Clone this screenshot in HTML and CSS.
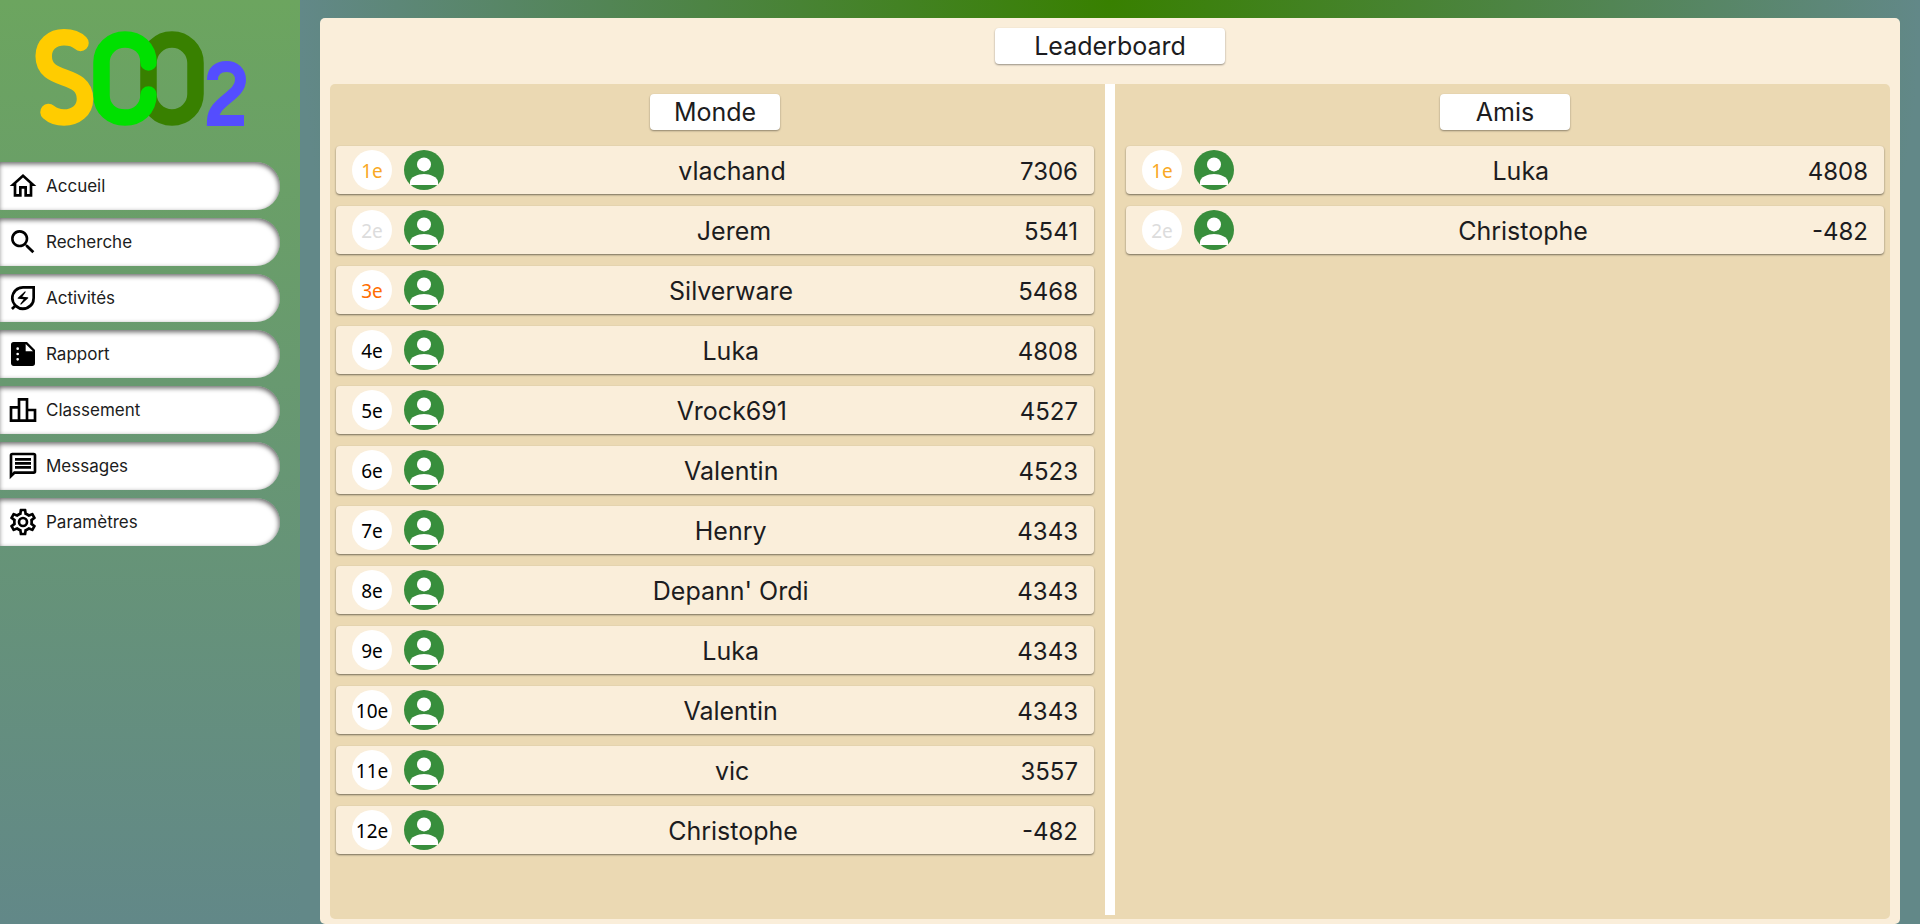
FILE: index.html
```html
<!DOCTYPE html>
<html lang="fr">
<head>
<meta charset="utf-8">
<title>SCO2 - Classement</title>
<link rel="stylesheet" href="styles.css">
</head>
<body>
<svg class="defs" aria-hidden="true">
  <symbol id="avatar" viewBox="0 0 40 40">
    <circle cx="20" cy="20" r="20" fill="#388e3c"/>
    <circle cx="20" cy="14.400" r="7" fill="#fff"/>
    <path d="M6 35v-3c0-5 8-8 14-8s14 3 14 8v3z" fill="#fff"/>
  </symbol>
</svg>
<aside class="sidebar">
  <svg class="logo" viewBox="0 0 300 162" role="img" aria-label="SCO2">
    <g fill="none" stroke-width="16.500" stroke-linecap="round">
      <rect x="148.500" y="39.500" width="47" height="78" rx="23.500" stroke="#388000"/>
      <path d="M148.500 62.500C148.500 48 138 39.500 125 39.500S101.500 49 101.500 62.500V95C101.500 109 112 117.500 125 117.500S148.500 109 148.500 94.500" stroke="#00e000"/>
      <path d="M80.500 43C76 38.500 70 37.200 64 37.200C52 37.200 43.700 45 43.700 56C43.700 84 85 71 85 99C85 110 76 117.500 64 117.500C58 117.500 53 116 48.500 112" stroke="#fc0"/>
      <path d="M212.500 80C212.500 71 218 66.500 226.500 66.500C235 66.500 240.500 72 240.500 80C240.500 96 213 101 212.500 120.500H244" stroke="#544dff" stroke-width="11" stroke-linecap="butt"/>
    </g>
  </svg>
  <nav class="menu">
    <a class="menu-item" href="#"><svg viewBox="0 0 24 24"><path d="m12 5.690 5 4.500V18h-2v-6H9v6H7v-7.810zM12 3 2 12h3v8h6v-6h2v6h6v-8h3z"/></svg>Accueil</a>
    <a class="menu-item" href="#"><svg viewBox="0 0 24 24"><path d="M15.500 14h-.79l-.28-.27A6.500 6.500 0 1 0 13.730 14.430l.27.28v.79l5 5L20.500 19zm-6 0a4.500 4.500 0 1 1 0-9 4.500 4.500 0 0 1 0 9z"/></svg>Recherche</a>
    <a class="menu-item" href="#"><svg viewBox="0 0 24 24"><path d="M12 3a9 9 0 0 0-7 14.660L3 19.590 4.410 21l1.930-1.930A9 9 0 0 0 21 12V3zm7 9a7 7 0 1 1-7-7h7zM8.460 12.630l4.050.4-2.440 3.330c-.11.160-.1.380.04.520.15.150.4.160.56.010l5.160-4.630c.33-.3.150-.85-.3-.89l-4.050-.4 2.440-3.330c.11-.16.100-.38-.04-.52a.405.405 0 0 0-.56-.01l-5.160 4.630c-.32.300-.14.850.3.890z"/></svg>Activités</a>
    <a class="menu-item" href="#"><svg viewBox="0 0 24 24"><path d="M15 3H5a2 2 0 0 0-2 2v14c0 1.100.9 2 2 2h14a2 2 0 0 0 2-2V9zM8 17a1 1 0 1 1 0-2 1 1 0 0 1 0 2zm0-4a1 1 0 1 1 0-2 1 1 0 0 1 0 2zm0-4a1 1 0 1 1 0-2 1 1 0 0 1 0 2zm6 1V4.500l5.500 5.500z"/></svg>Rapport</a>
    <a class="menu-item" href="#"><svg viewBox="0 0 24 24"><path d="M16 11V3H8v6H2v12h20V11zm-6-6h4v14h-4zm-6 6h4v8H4zm16 8h-4v-6h4z"/></svg>Classement</a>
    <a class="menu-item" href="#"><svg viewBox="0 0 24 24"><path d="M4 4h16v12H5.170L4 17.170zm0-2a2 2 0 0 0-2 2v18l4-4h14a2 2 0 0 0 2-2V4a2 2 0 0 0-2-2zm2 10h12v2H6zm0-3h12v2H6zm0-3h12v2H6z"/></svg>Messages</a>
    <a class="menu-item" href="#"><svg viewBox="0 0 24 24"><path d="M19.430 12.980c.04-.32.070-.64.070-.98s-.03-.66-.07-.98l2.110-1.650c.19-.15.240-.42.120-.64l-2-3.460a.5.500 0 0 0-.61-.22l-2.490 1a7.300 7.300 0 0 0-1.690-.98l-.38-2.650A.49.490 0 0 0 14 2h-4a.49.490 0 0 0-.49.420l-.38 2.650c-.61.250-1.170.590-1.690.980l-2.490-1a.5.500 0 0 0-.61.220l-2 3.460c-.13.220-.07.490.12.640l2.110 1.650a7.900 7.900 0 0 0 0 1.960l-2.110 1.650c-.19.150-.24.420-.12.640l2 3.460c.12.220.39.300.61.220l2.490-1c.52.400 1.080.73 1.690.98l.38 2.650c.03.240.24.420.49.420h4c.25 0 .46-.18.490-.42l.38-2.650c.61-.25 1.170-.59 1.690-.98l2.490 1c.23.090.49 0 .61-.22l2-3.460a.5.500 0 0 0-.12-.64zm-1.980-1.710a5.300 5.300 0 0 1 0 1.460l-.14 1.130.89.700 1.080.84-.7 1.210-1.270-.51-1.040-.42-.9.680c-.43.320-.84.560-1.250.73l-1.060.43-.16 1.130-.2 1.350h-1.400l-.19-1.350-.16-1.130-1.060-.43c-.43-.18-.83-.41-1.230-.71l-.91-.7-1.060.43-1.270.51-.7-1.210 1.080-.84.890-.7-.14-1.130a6.500 6.500 0 0 1 0-1.480l.14-1.130-.89-.7-1.080-.84.700-1.210 1.270.51 1.040.42.9-.68c.43-.32.840-.56 1.250-.73l1.060-.43.160-1.130.2-1.350h1.390l.19 1.350.16 1.130 1.060.43c.43.180.83.410 1.230.71l.91.700 1.060-.43 1.270-.51.700 1.210-1.070.85-.89.700zM12 8a4 4 0 1 0 0 8 4 4 0 0 0 0-8zm0 6a2 2 0 1 1 0-4 2 2 0 0 1 0 4z"/></svg>Paramètres</a>
  </nav>
</aside>
<main class="content">
  <section class="panel">
    <h1 class="label label-wide">Leaderboard</h1>
    <div class="board">
      <section class="column">
        <h2 class="label">Monde</h2>
        <ol class="ranking">
          <li class="row"><span class="rank gold">1e</span><svg class="avatar"><use href="#avatar"/></svg><span class="name">vlachand</span><span class="score">7306</span></li>
          <li class="row"><span class="rank silver">2e</span><svg class="avatar"><use href="#avatar"/></svg><span class="name">Jerem</span><span class="score">5541</span></li>
          <li class="row"><span class="rank bronze">3e</span><svg class="avatar"><use href="#avatar"/></svg><span class="name">Silverware</span><span class="score">5468</span></li>
          <li class="row"><span class="rank">4e</span><svg class="avatar"><use href="#avatar"/></svg><span class="name">Luka</span><span class="score">4808</span></li>
          <li class="row"><span class="rank">5e</span><svg class="avatar"><use href="#avatar"/></svg><span class="name">Vrock691</span><span class="score">4527</span></li>
          <li class="row"><span class="rank">6e</span><svg class="avatar"><use href="#avatar"/></svg><span class="name">Valentin</span><span class="score">4523</span></li>
          <li class="row"><span class="rank">7e</span><svg class="avatar"><use href="#avatar"/></svg><span class="name">Henry</span><span class="score">4343</span></li>
          <li class="row"><span class="rank">8e</span><svg class="avatar"><use href="#avatar"/></svg><span class="name">Depann' Ordi</span><span class="score">4343</span></li>
          <li class="row"><span class="rank">9e</span><svg class="avatar"><use href="#avatar"/></svg><span class="name">Luka</span><span class="score">4343</span></li>
          <li class="row"><span class="rank">10e</span><svg class="avatar"><use href="#avatar"/></svg><span class="name">Valentin</span><span class="score">4343</span></li>
          <li class="row"><span class="rank">11e</span><svg class="avatar"><use href="#avatar"/></svg><span class="name">vic</span><span class="score">3557</span></li>
          <li class="row"><span class="rank">12e</span><svg class="avatar"><use href="#avatar"/></svg><span class="name">Christophe</span><span class="score">-482</span></li>
        </ol>
      </section>
      <div class="divider"></div>
      <section class="column">
        <h2 class="label">Amis</h2>
        <ol class="ranking">
          <li class="row"><span class="rank gold">1e</span><svg class="avatar"><use href="#avatar"/></svg><span class="name">Luka</span><span class="score">4808</span></li>
          <li class="row"><span class="rank silver">2e</span><svg class="avatar"><use href="#avatar"/></svg><span class="name">Christophe</span><span class="score">-482</span></li>
        </ol>
      </section>
    </div>
  </section>
</main>
</body>
</html>
```
FILE: styles.css
```css
* { box-sizing: border-box; }

body {
  margin: 0;
  min-height: 100vh;
  display: flex;
  font-family: Inter, "Noto Sans", sans-serif;
  color: #1c1c20;
}

.defs { position: absolute; width: 0; height: 0; }

.sidebar {
  flex: 0 0 300px;
  background: linear-gradient(#6ca55f, #628888);
}

.logo { display: block; width: 100%; }

.menu {
  display: flex;
  flex-direction: column;
  gap: 8px;
  padding-right: 20px;
}

.menu-item {
  display: flex;
  align-items: center;
  gap: 7px;
  height: 48px;
  padding-left: 7px;
  border-radius: 0 24px 24px 0;
  background: #fff;
  box-shadow: inset -1px 2px 5px rgba(0, 0, 0, .6);
  color: #1c1c20;
  font-size: 17px;
  text-decoration: none;
}

.menu-item svg { width: 32px; height: 32px; fill: #000; }

.content {
  flex: 1;
  display: flex;
  padding: 18px 20px 0;
  background: radial-gradient(ellipse farthest-side at top, #388000, #628888);
}

.panel {
  flex: 1;
  display: flex;
  flex-direction: column;
  align-items: center;
  padding: 10px 10px 5px;
  border-radius: 5px;
  background: #faeeda;
}

.label {
  min-width: 130px;
  margin: 0;
  border-radius: 4px;
  background: #fff;
  box-shadow: 0 1px 2px rgba(0, 0, 0, .4);
  font-size: 25px;
  font-weight: 400;
  line-height: 36px;
  text-align: center;
}

.label-wide { min-width: 230px; margin-bottom: 20px; }

.board {
  flex: 1;
  align-self: stretch;
  display: flex;
  gap: 11px;
  padding: 0 6px;
  border-radius: 5px;
  background: #ebd9b3;
}

.divider { width: 10px; margin-bottom: 4px; background: #fff; }

.column {
  flex: 1;
  display: flex;
  flex-direction: column;
  align-items: center;
  gap: 16px;
  padding-top: 10px;
}

.ranking {
  align-self: stretch;
  display: flex;
  flex-direction: column;
  gap: 12px;
  margin: 0;
  padding: 0;
  list-style: none;
}

.row {
  display: flex;
  align-items: center;
  gap: 12px;
  height: 48px;
  padding: 0 16px;
  border-radius: 4px;
  background: #faeeda;
  box-shadow: 0 1px 2px rgba(0, 0, 0, .5);
  font-size: 25px;
}

.rank {
  width: 40px;
  height: 40px;
  border-radius: 50%;
  background: #fff;
  color: #000;
  font-family: "Noto Sans", sans-serif;
  font-size: 19px;
  line-height: 42px;
  text-align: center;
}

.gold { color: #f9a825; }
.silver { color: #dcdcdc; }
.bronze { color: #ff6d00; }

.avatar { width: 40px; height: 40px; }

.name, .score { padding-top: 2px; }
.name { flex: 1; text-align: center; }
.score { font-size: 24px; }
```
